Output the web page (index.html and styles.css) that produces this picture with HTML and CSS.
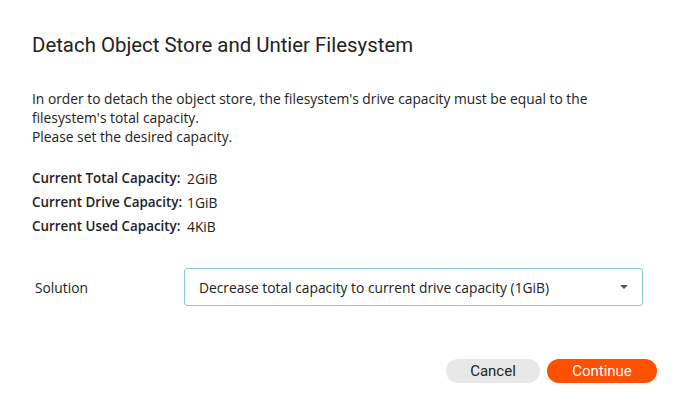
FILE: index.html
```html
<!DOCTYPE html>
<html>
<head>
<meta charset="utf-8">
<link rel="stylesheet" href="styles.css">
</head>
<body>
<div class="dialog">
  <h1 class="title">Detach Object Store and Untier Filesystem</h1>
  <p class="desc">In order to detach the object store, the filesystem's drive capacity must be equal to the filesystem's total capacity.<br>Please set the desired capacity.</p>
  <div class="stats">
    <div class="stat"><span class="label">Current Total Capacity:</span><span class="value">2GiB</span></div>
    <div class="stat"><span class="label">Current Drive Capacity:</span><span class="value">1GiB</span></div>
    <div class="stat"><span class="label">Current Used Capacity:</span><span class="value">4KiB</span></div>
  </div>
  <div class="field">
    <span class="field-label">Solution</span>
    <div class="select">
      <span class="select-text">Decrease total capacity to current drive capacity (1GiB)</span>
      <svg class="caret" width="8" height="4" viewBox="0 0 8 4"><path d="M0 0H8L4 4Z" fill="#555"/></svg>
    </div>
  </div>
  <div class="actions">
    <button class="btn btn-cancel">Cancel</button>
    <button class="btn btn-continue">Continue</button>
  </div>
</div>
</body>
</html>
```
FILE: styles.css
```css
* { box-sizing: border-box; }
html, body { margin: 0; padding: 0; background: #fff; }
body { font-family: "Open Sans", "Noto Sans", sans-serif; color: #222; }
.dialog { width: 694px; height: 419px; padding: 32px 37px 0 32px; display: flex; flex-direction: column; }
.title { margin: 0; font-family: "Roboto", sans-serif; font-weight: 400; font-size: 20.4px; line-height: 26px; color: #222; }
.desc { margin: 31px 0 0 0; font-size: 13.8px; line-height: 19px; color: #222; max-width: 625px; }
.stats { margin-top: 23px; display: flex; flex-direction: column; gap: 5px; }
.stat { display: grid; grid-template-columns: 155px auto; font-size: 13.8px; line-height: 19px; white-space: nowrap; }
.label { font-weight: 600; font-size: 13.4px; }
.field { margin-top: 32px; display: flex; align-items: center; }
.field-label { width: 152px; padding-left: 3px; font-size: 13.8px; }
.select { flex: 1; height: 38px; border: 1px solid #8cc6dc; border-radius: 3px; display: flex; align-items: center; padding: 0 14px 0 14px; justify-content: space-between; font-size: 13.8px; margin-right: 14px; }
.actions { margin-top: auto; margin-bottom: 36px; display: flex; justify-content: flex-end; gap: 7px; }
.btn { border: none; height: 24px; border-radius: 12px; font-family: "Roboto", sans-serif; font-size: 15px; padding: 0; }
.btn-cancel { width: 94px; background: #e8e8e8; color: #222; }
.btn-continue { width: 110px; background: #ff4f00; color: #fff; }
```
